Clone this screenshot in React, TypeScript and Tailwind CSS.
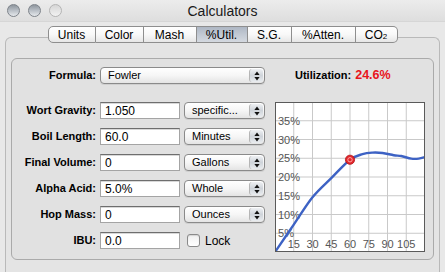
import React from "react";

const tabs = ["Units", "Color", "Mash", "%Util.", "S.G.", "%Atten.", "CO2"];
const tabWidths = [48, 48, 53, 51, 44, 64, 42];

const rows = [
  { label: "Wort Gravity:", value: "1.050", unit: "specific..." },
  { label: "Boil Length:", value: "60.0", unit: "Minutes" },
  { label: "Final Volume:", value: "0", unit: "Gallons" },
  { label: "Alpha Acid:", value: "5.0%", unit: "Whole" },
  { label: "Hop Mass:", value: "0", unit: "Ounces" },
];

// minutes, percent utilization
const curve: [number, number][] = [
  [0, 0],
  [15, 7.3],
  [30, 14.6],
  [45, 19.7],
  [60, 24.6],
  [70, 26.1],
  [78, 26.5],
  [86, 26.4],
  [95, 25.8],
  [101, 25.6],
  [109, 24.9],
  [115, 24.9],
  [120, 25.3],
];

function toPx([m, p]: [number, number]): [number, number] {
  return [m * 1.25, 150 - p * 3.75];
}

function smoothPath(pts: [number, number][]) {
  const p = pts.map(toPx);
  let d = `M${p[0][0]},${p[0][1]}`;
  for (let i = 0; i < p.length - 1; i++) {
    const p0 = p[i - 1] || p[i];
    const p1 = p[i];
    const p2 = p[i + 1];
    const p3 = p[i + 2] || p2;
    const c1x = p1[0] + (p2[0] - p0[0]) / 6;
    const c1y = p1[1] + (p2[1] - p0[1]) / 6;
    const c2x = p2[0] - (p3[0] - p1[0]) / 6;
    const c2y = p2[1] - (p3[1] - p1[1]) / 6;
    d += ` C${c1x},${c1y} ${c2x},${c2y} ${p2[0]},${p2[1]}`;
  }
  return d;
}

function Light({ dim }: { dim?: boolean }) {
  return (
    <div
      className={
        dim
          ? "h-[13px] w-[13px] rounded-full border border-[#b4b4b4] bg-gradient-to-b from-[#d6d6d6] to-[#f2f2f2]"
          : "h-[13px] w-[13px] rounded-full border border-[#7d838a] bg-gradient-to-b from-[#8e959d] via-[#b9bfc6] to-[#e6e9ec]"
      }
    />
  );
}

function Arrows() {
  return (
    <svg width="6" height="10" viewBox="0 0 6 10">
      <path d="M3 0.5 L5.6 4 L0.4 4 Z" fill="#111" />
      <path d="M3 9.5 L5.6 6 L0.4 6 Z" fill="#111" />
    </svg>
  );
}

function Popup({ text, w }: { text: string; w: string }) {
  return (
    <div
      className={`${w} flex h-[17px] items-center rounded-[4px] border border-[#8a8a8a] bg-gradient-to-b from-white via-[#f6f6f6] to-[#e4e4e4] shadow-[0_1px_0_rgba(0,0,0,0.08)]`}
    >
      <span className="flex-1 truncate pl-[7px] text-[11px] leading-none text-black">
        {text}
      </span>
      <div className="mr-[1px] flex h-[13px] w-[14px] items-center justify-center rounded-[3px] border-l border-[#b5b5b5] bg-gradient-to-b from-[#eef0f3] via-[#cfd4da] to-[#e9ecef]">
        <Arrows />
      </div>
    </div>
  );
}

function Field({ value }: { value: string }) {
  return (
    <div className="flex h-[17px] w-[80px] items-center border border-[#a4a4a4] border-t-[#6e6e6e] bg-white pl-[4px] text-[12px] leading-none text-black shadow-[inset_0_1px_0_#d8d8d8]">
      {value}
    </div>
  );
}

function Chart() {
  const ticks = [1, 2, 3, 4, 5, 6, 7];
  return (
    <svg width="150" height="150" viewBox="0 0 150 150" className="block">
      <rect x="0" y="0" width="150" height="150" fill="#fff" />
      {ticks.map((i) => (
        <g key={i}>
          <line x1={i * 18.75} y1="0" x2={i * 18.75} y2="150" stroke="#c9c9c9" strokeWidth="1" />
          <line x1="0" y1={i * 18.75} x2="150" y2={i * 18.75} stroke="#c9c9c9" strokeWidth="1" />
        </g>
      ))}
      {ticks.map((i) => (
        <text
          key={"y" + i}
          x="3"
          y={150 - i * 18.75 + 4}
          fontSize="11"
          fill="#555"
          fontFamily="Liberation Sans, Arial, sans-serif"
        >
          {i * 5}%
        </text>
      ))}
      {ticks.map((i) => (
        <text
          key={"x" + i}
          x={i * 18.75}
          y="145.5"
          fontSize="11"
          fill="#555"
          textAnchor="middle"
          fontFamily="Liberation Sans, Arial, sans-serif"
        >
          {i * 15}
        </text>
      ))}
      <path d={smoothPath(curve)} fill="none" stroke="#3d62c4" strokeWidth="2.4" strokeLinecap="round" strokeLinejoin="round" />
      <circle cx="75" cy="57.75" r="4.6" fill="#e3262b" stroke="#b01418" strokeWidth="0.8" />
      <circle cx="75" cy="57.75" r="2.2" fill="none" stroke="#ffb0b0" strokeWidth="0.9" />
      <rect x="0.5" y="0.5" width="149" height="149" fill="none" stroke="#5a5a5a" strokeWidth="1" />
    </svg>
  );
}

export default function App() {
  return (
    <div className="flex h-[272px] w-[445px] flex-col overflow-hidden bg-[#e8e8e8] font-['Liberation_Sans',Arial,sans-serif] text-black">
      {/* title bar */}
      <div className="grid h-[22px] shrink-0 grid-cols-[1fr_auto_1fr] items-center border-b border-[#d6d6d6] bg-gradient-to-b from-[#ececec] to-[#dedede]">
        <div className="flex items-center gap-[8px] pl-[7px]">
          <Light />
          <Light />
          <Light dim />
        </div>
        <div className="text-[14px] leading-none text-[#1a1a1a]">Calculators</div>
        <div />
      </div>

      <div className="flex flex-1 flex-col px-[5px] pt-[4px]">
        {/* tabs */}
        <div className="relative z-10 -mb-[6px] flex justify-center">
          {tabs.map((t, i) => {
            const sel = t === "%Util.";
            return (
              <div
                key={t}
                style={{ width: tabWidths[i] }}
                className={`flex h-[17px] items-center justify-center border-y border-r border-[#8e8e8e] text-[12px] leading-none ${
                  i === 0 ? "rounded-l-[5px] border-l" : ""
                } ${i === tabs.length - 1 ? "rounded-r-[5px]" : ""} ${
                  sel
                    ? "bg-gradient-to-b from-[#aeb7c4] via-[#c2c9d3] to-[#d4d9e0]"
                    : "bg-gradient-to-b from-white via-[#f8f8f8] to-[#e6e6e6]"
                }`}
              >
                {t === "CO2" ? (
                  <span>
                    CO<span className="text-[8px]">2</span>
                  </span>
                ) : (
                  t
                )}
              </div>
            );
          })}
        </div>

        {/* tab panel */}
        <div className="flex-1 rounded-t-[6px] border border-b-0 border-[#b9b9b9] bg-[#e4e4e4] pl-[5px] pt-[20px]">
          <div className="flex h-[202px] w-[423px] rounded-[6px] border border-[#aaaaaa] bg-[#e1e1e1] pt-[8px]">
            {/* left column */}
            <div className="flex flex-col">
              <div className="flex h-[17px] items-center">
                <div className="w-[84px] text-right text-[11px] font-bold leading-none">Formula:</div>
                <div className="ml-[4px]">
                  <Popup text="Fowler" w="w-[165px]" />
                </div>
              </div>
              <div className="mt-[18px] flex flex-col gap-[9px]">
                {rows.map((r) => (
                  <div key={r.label} className="flex h-[17px] items-center">
                    <div className="w-[84px] text-right text-[11px] font-bold leading-none">{r.label}</div>
                    <div className="ml-[4px]">
                      <Field value={r.value} />
                    </div>
                    <div className="ml-[4px]">
                      <Popup text={r.unit} w="w-[81px]" />
                    </div>
                  </div>
                ))}
                <div className="flex h-[17px] items-center">
                  <div className="w-[84px] text-right text-[11px] font-bold leading-none">IBU:</div>
                  <div className="ml-[4px]">
                    <Field value="0.0" />
                  </div>
                  <div className="ml-[7px] flex items-center gap-[5px]">
                    <div className="h-[13px] w-[13px] rounded-[3px] border border-[#8a8a8a] bg-gradient-to-b from-[#f0f0f0] to-white shadow-[inset_0_1px_1px_rgba(0,0,0,0.12)]" />
                    <span className="text-[12px] leading-none">Lock</span>
                  </div>
                </div>
              </div>
            </div>

            {/* right column */}
            <div className="ml-[10px] flex w-[150px] flex-col">
              <div className="flex h-[17px] items-center gap-[4px] pl-[20px]">
                <span className="text-[11px] font-bold leading-none">Utilization:</span>
                <span className="text-[12.5px] font-bold leading-none text-[#e8141c]">24.6%</span>
              </div>
              <div className="mt-[18px]">
                <Chart />
              </div>
            </div>
          </div>
        </div>
      </div>
    </div>
  );
}
